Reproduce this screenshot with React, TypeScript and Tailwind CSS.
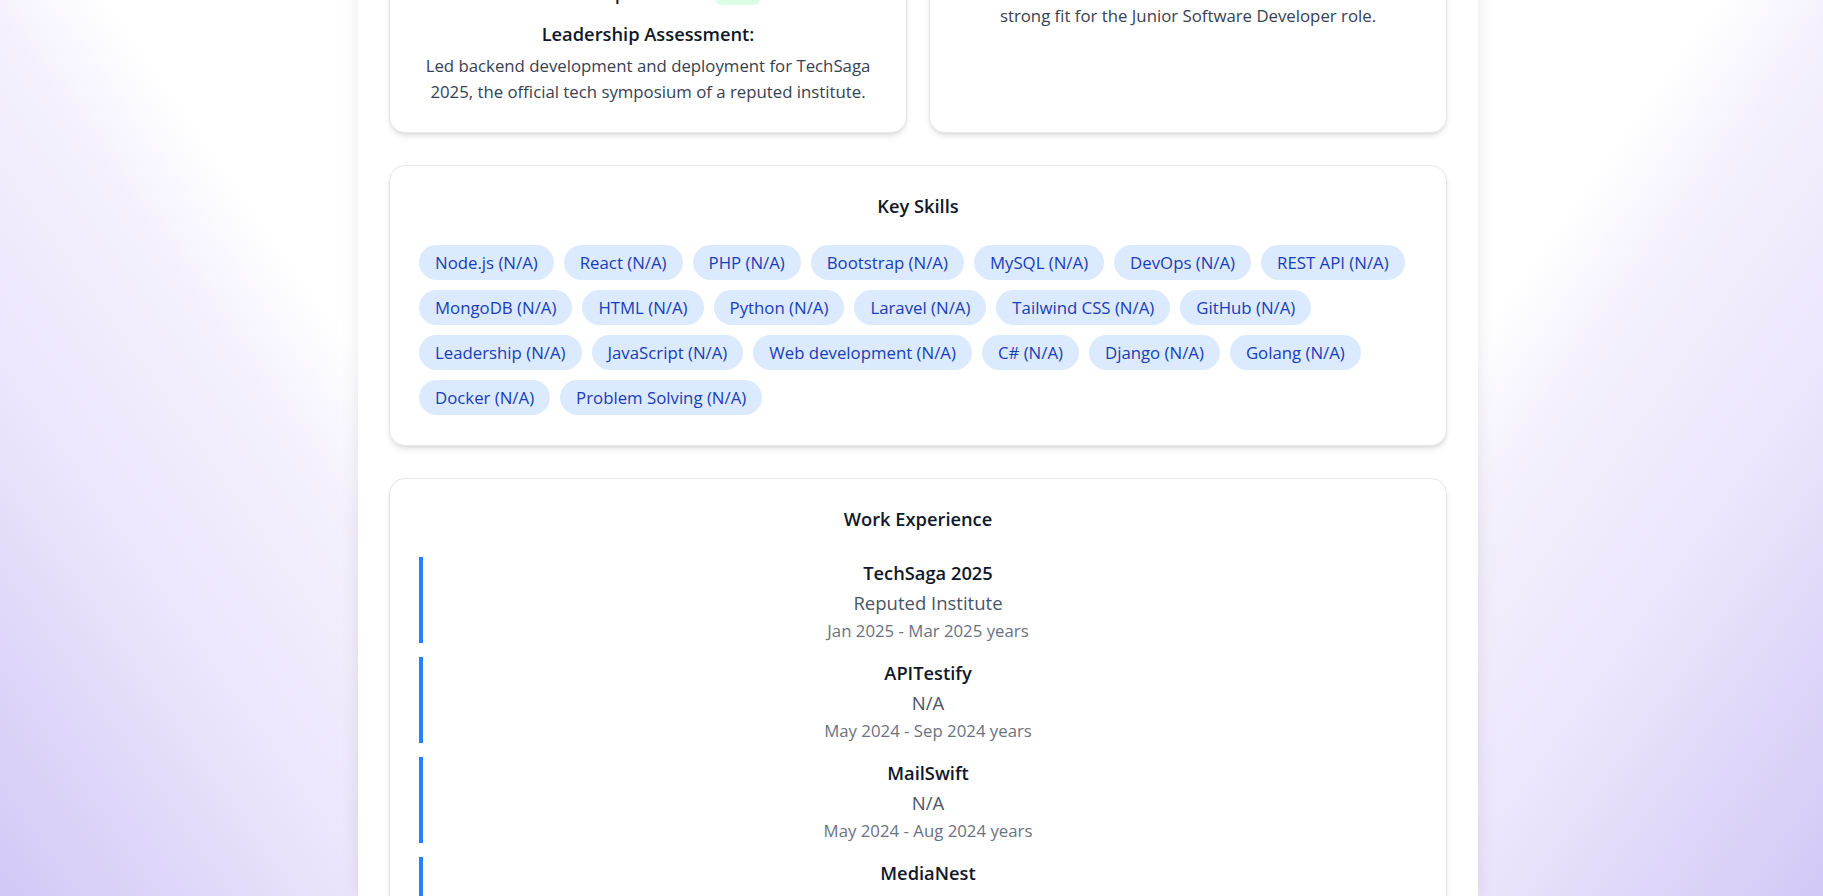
import React from "react";

const skillRows: string[][] = [
  ["Node.js", "React", "PHP", "Bootstrap", "MySQL", "DevOps", "REST API"],
  ["MongoDB", "HTML", "Python", "Laravel", "Tailwind CSS", "GitHub"],
  ["Leadership", "JavaScript", "Web development", "C#", "Django", "Golang"],
  ["Docker", "Problem Solving"],
];

const jobs = [
  { title: "TechSaga 2025", org: "Reputed Institute", date: "Jan 2025 - Mar 2025 years" },
  { title: "APITestify", org: "N/A", date: "May 2024 - Sep 2024 years" },
  { title: "MailSwift", org: "N/A", date: "May 2024 - Aug 2024 years" },
  { title: "MediaNest", org: "N/A", date: "Feb 2024 - Apr 2024 years" },
  { title: "CodeCraft", org: "N/A", date: "Oct 2023 - Jan 2024 years" },
];

function Card({ className, children }: { className?: string; children: React.ReactNode }) {
  return (
    <div className={"bg-white border border-gray-200 rounded-2xl shadow-md " + (className ?? "")}>
      {children}
    </div>
  );
}

export default function App() {
  return (
    <div className="h-screen overflow-hidden flex justify-center pl-[13px] font-['Open_Sans',sans-serif] bg-no-repeat [background-image:linear-gradient(234.8deg,#ffffff_52%,#f4f1fd_60%,#ebe6fc_76%,#ddd4f8_90%,#d3c8f6_100%),linear-gradient(125.2deg,#ffffff_52%,#f4f1fd_60%,#ebe6fc_76%,#ddd4f8_90%,#d3c8f6_100%)] [background-size:50%_100%] [background-position:left_top,right_top]">
      <div className="w-[1120px] shrink-0 bg-white shadow-[0_0_18px_rgba(0,0,0,0.09)] -mt-[47px] px-[31px] pb-12 flex flex-col gap-8">
        {/* Top row (partially scrolled out of view) */}
        <div className="grid grid-cols-2 gap-[22px]">
          <Card className="pt-[26px] pb-[26px] px-[29px] text-center">
            <div className="h-7 flex items-center justify-center gap-2">
              <span className="text-[16.8px] font-semibold text-gray-900">Leadership Potential:</span>
              <span className="h-[22px] px-2.5 rounded-md bg-green-100 text-green-800 text-[14px] leading-[22px]">
                N/A
              </span>
            </div>
            <h3 className="mt-3 text-[18.3px] leading-7 font-semibold text-gray-900">Leadership Assessment:</h3>
            <p className="mt-[5px] text-[16.8px] leading-[26.4px] text-gray-700">
              Led backend development and deployment for TechSaga 2025, the official tech symposium of a reputed
              institute.
            </p>
          </Card>
          <Card className="pt-[26px] pb-[26px] px-[29px] text-center">
            <p className="-mt-[3px] text-[16.8px] leading-[26.4px] text-gray-700">
              His practical project experience makes him a
              <br />
              strong fit for the Junior Software Developer role.
            </p>
          </Card>
        </div>

        {/* Key Skills */}
        <Card className="pt-[26px] pb-[30px] px-[29px]">
          <h2 className="text-center text-[18.3px] leading-7 font-semibold text-gray-900">Key Skills</h2>
          <div className="mt-[25px] flex flex-col gap-[10px]">
            {skillRows.map((row, i) => (
              <div key={i} className="flex gap-[10px]">
                {row.map((s) => (
                  <span
                    key={s}
                    className="h-[35px] px-[16px] flex items-center rounded-full bg-blue-100 text-blue-800 text-[16.8px] whitespace-nowrap"
                  >
                    {s} (N/A)
                  </span>
                ))}
              </div>
            ))}
          </div>
        </Card>

        {/* Work Experience */}
        <Card className="pt-[26px] pb-[30px] px-[29px]">
          <h2 className="text-center text-[18.3px] leading-7 font-semibold text-gray-900">Work Experience</h2>
          <div className="mt-[24px] flex flex-col gap-[14px]">
            {jobs.map((j) => (
              <div key={j.title} className="border-l-4 border-blue-500 pl-4 pt-0.5 text-center">
                <h4 className="text-[18.3px] leading-7 font-semibold text-gray-900">{j.title}</h4>
                <p className="mt-0.5 text-[18.5px] leading-7 text-gray-600">{j.org}</p>
                <p className="mt-0.5 text-[16.8px] leading-6 text-gray-500">{j.date}</p>
              </div>
            ))}
          </div>
        </Card>
      </div>
    </div>
  );
}
